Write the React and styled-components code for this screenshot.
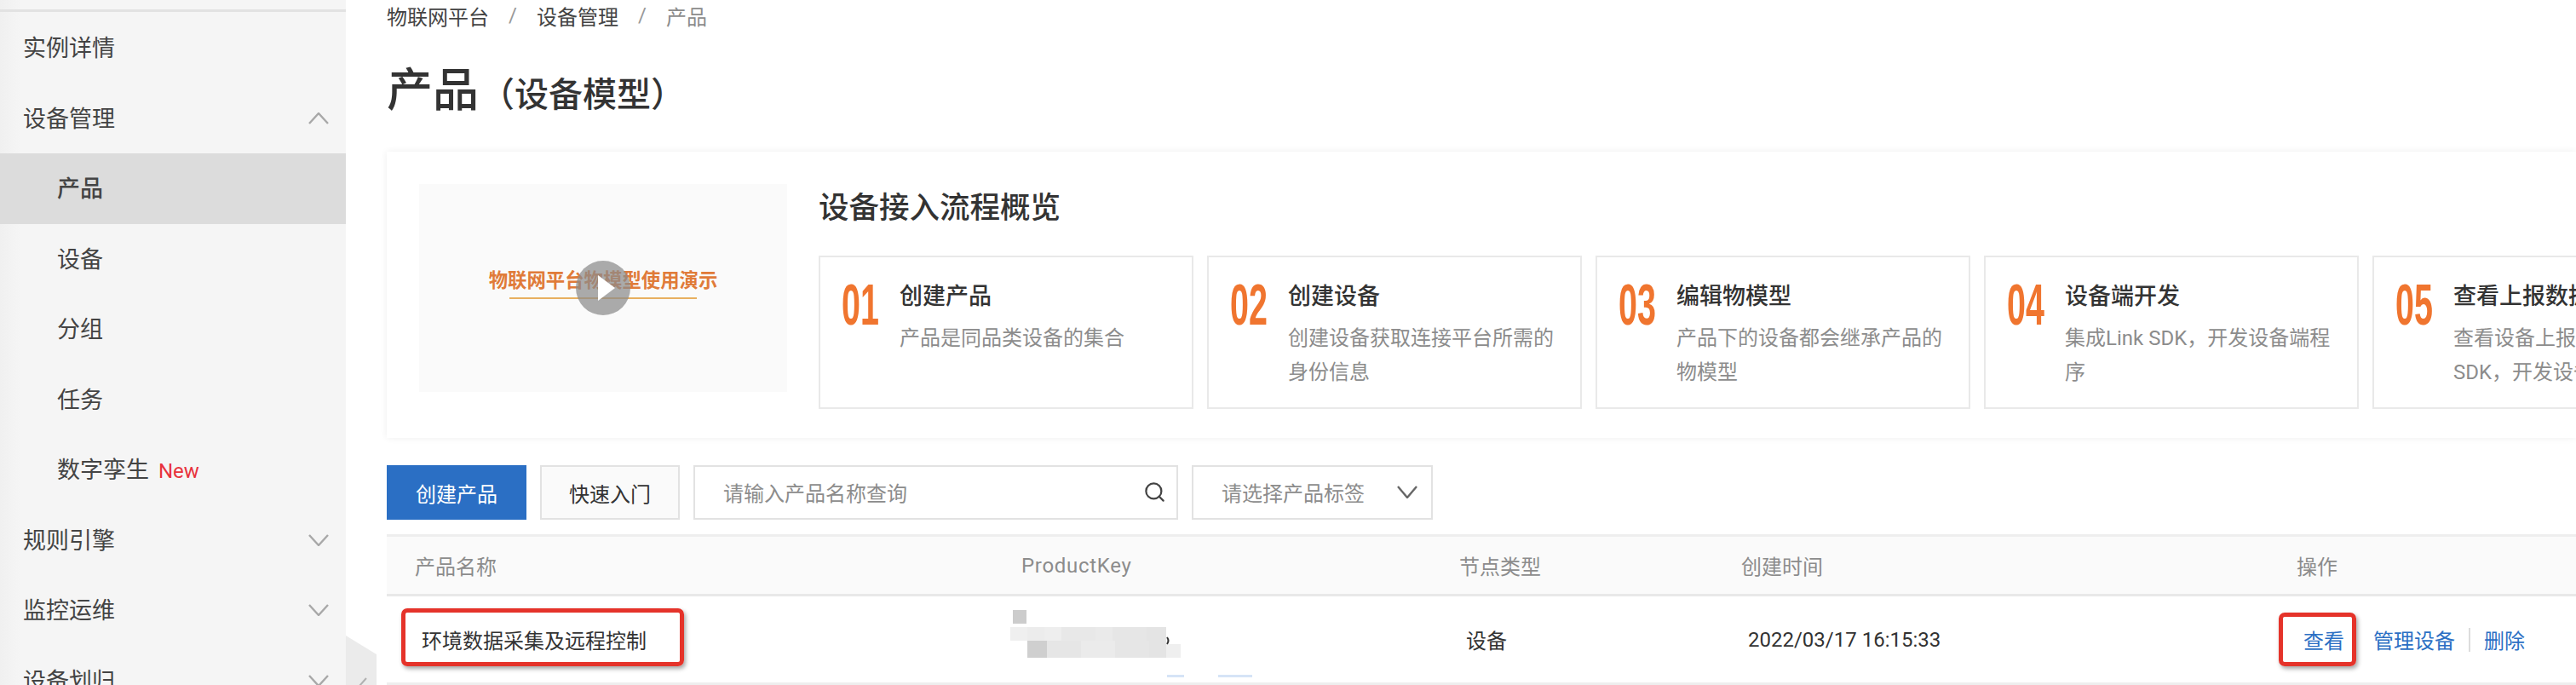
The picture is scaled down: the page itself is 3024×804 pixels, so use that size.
import React from "react";
import styled, { createGlobalStyle } from "styled-components";
import { Search } from "lucide-react";

const GlobalStyle = createGlobalStyle`
  html, body {
    margin: 0;
    padding: 0;
    background: #fff;
    overflow: hidden;
  }
  * {
    box-sizing: border-box;
  }
`;

const Page = styled.div`
  position: relative;
  display: flex;
  width: 3024px;
  height: 804px;
  overflow: hidden;
  font-family: Roboto, "Noto Sans CJK SC", sans-serif;
  font-size: 24px;
  color: #333;
`;

const Sidebar = styled.aside`
  flex: 0 0 406px;
  padding-top: 15px;
  background: linear-gradient(90deg, #f0f0f0 0, #f5f5f5 24px);
  position: relative;

  &::before {
    content: "";
    position: absolute;
    top: 11px;
    left: 0;
    right: 0;
    height: 3px;
    background: #e2e2e2;
  }
`;

const NavRow = styled.div`
  display: flex;
  align-items: center;
  justify-content: space-between;
  height: 82.5px;
  padding-left: ${(p) => (p.$sub ? "67px" : "27px")};
  padding-right: 20px;
  font-size: 27px;
  line-height: 1;
  color: #444;
  background: ${(p) => (p.$active ? "#dcdcdc" : "transparent")};
  font-weight: ${(p) => (p.$active ? 500 : 400)};
  white-space: nowrap;
`;

const NavLabel = styled.span`
  margin-top: 3px;
`;

const NewTag = styled.span`
  margin-left: 11px;
  font-size: 24px;
  color: #e8323c;
`;

const Handle = styled.div`
  position: absolute;
  left: 406px;
  top: 746px;
  width: 36px;
  height: 58px;
  background: #ebebeb;
  clip-path: polygon(0 0, 100% 38%, 100% 100%, 0 100%);
`;

const HandleArrow = styled.svg`
  position: absolute;
  left: 418px;
  top: 794px;
`;

const Main = styled.main`
  flex: 1;
  min-width: 0;
  padding-left: 48px;
  overflow: hidden;
`;

const Breadcrumb = styled.nav`
  display: flex;
  align-items: center;
  height: 36px;
  font-size: 24px;
  color: #444;
`;

const Crumb = styled.span`
  color: ${(p) => (p.$current ? "#8c8c8c" : "#444")};
`;

const CrumbSep = styled.span`
  width: 56px;
  text-align: center;
  color: #999;
`;

const TitleBlock = styled.div`
  display: flex;
  align-items: center;
  height: 142px;
  font-weight: 500;
  color: #333;
`;

const TitleMain = styled.h1`
  margin: 0;
  font-size: 54px;
  font-weight: 500;
  line-height: 1;
`;

const TitleSub = styled.span`
  font-size: 40px;
  line-height: 1;
  margin-top: 9px;
  margin-left: 2px;
`;

const OverviewCard = styled.section`
  display: flex;
  height: 336px;
  padding: 38px 0 0 38px;
  background: #fff;
  box-shadow: 0 0 8px rgba(0, 0, 0, 0.07);
`;

const Thumb = styled.div`
  position: relative;
  flex: 0 0 432px;
  height: 244px;
  background: #fafafa;
  display: flex;
  flex-direction: column;
  align-items: center;
  padding-top: 97px;
`;

const ThumbTitle = styled.div`
  font-size: 22.4px;
  line-height: 32px;
  font-weight: 700;
  color: #e07b39;
  white-space: nowrap;
`;

const ThumbLine = styled.div`
  width: 220px;
  height: 2px;
  margin-top: 4px;
  background: #e8b060;
`;

const Play = styled.svg`
  position: absolute;
  left: 184px;
  top: 90px;
`;

const Intro = styled.div`
  flex: 1;
  min-width: 0;
  margin-left: 37px;
`;

const IntroTitle = styled.h2`
  margin: 0;
  height: 84px;
  padding-top: 3px;
  font-size: 35.5px;
  line-height: 50px;
  font-weight: 500;
  color: #333;
`;

const Steps = styled.div`
  display: flex;
  gap: 16px;
`;

const Step = styled.div`
  display: flex;
  flex: 0 0 440px;
  height: 180px;
  border: 2px solid #e9e9e9;
  background: #fff;
  padding: 0 0 0 25px;
`;

const StepNum = styled.div`
  flex: 0 0 68px;
  min-width: 0;
  margin-top: 19px;
  font-family: "Liberation Sans", sans-serif;
  font-size: 68px;
  line-height: 72px;
  font-weight: 700;
  color: #f0752f;
  white-space: nowrap;
  transform: scaleX(0.58);
  transform-origin: left center;
`;

const StepBody = styled.div`
  flex: 1;
  min-width: 0;
  padding-top: 26px;
`;

const StepTitle = styled.div`
  font-size: 27px;
  line-height: 40px;
  font-weight: 500;
  color: #333;
  white-space: nowrap;
`;

const StepText = styled.div`
  margin-top: 9px;
  width: 324px;
  font-size: 24px;
  line-height: 40px;
  color: #8c8c8c;
`;

const Toolbar = styled.div`
  display: flex;
  gap: 16px;
  height: 64px;
  margin-top: 32px;
`;

const Button = styled.button`
  width: 164px;
  height: 64px;
  padding: 0;
  font: inherit;
  border: ${(p) => (p.$primary ? "0" : "2px solid #e2e2e2")};
  background: ${(p) => (p.$primary ? "#2b6fc4" : "#fafafa")};
  color: ${(p) => (p.$primary ? "#fff" : "#333")};
`;

const Field = styled.div`
  display: flex;
  align-items: center;
  justify-content: space-between;
  width: ${(p) => p.$w}px;
  height: 64px;
  padding: 0 ${(p) => p.$pr}px 2px 33px;
  border: 2px solid #e2e2e2;
  color: #8c8c8c;
  white-space: nowrap;
`;

const Table = styled.div`
  margin-top: 17px;
`;

const Row = styled.div`
  display: grid;
  grid-template-columns: 737px 514px 331px 652px 1fr;
  align-items: center;
  height: ${(p) => (p.$head ? "73px" : "104px")};
  border-top: ${(p) => (p.$head ? "3px solid #eee" : "0")};
  border-bottom: ${(p) => (p.$head ? "3px solid #e8e8e8" : "3px solid #eee")};
  background: ${(p) => (p.$head ? "#fafafa" : "#fff")};
  color: ${(p) => (p.$head ? "#8c8c8c" : "#333")};
`;

const Cell = styled.div`
  position: relative;
  padding-left: ${(p) => (p.$first ? (p.$head ? "33px" : "41px") : p.$head ? "8px" : "16px")};
  white-space: nowrap;
`;

const LatinLabel = styled.span`
  letter-spacing: 0.7px;
`;

const Mosaic = styled.svg`
  display: block;
  margin: -3px 0 0 -21px;
`;

const Actions = styled.div`
  display: flex;
  align-items: center;
  color: #2b6fc4;
`;

const ActionLink = styled.span`
  margin-left: ${(p) => p.$gap}px;
`;

const ActionDivider = styled.span`
  width: 2px;
  height: 28px;
  margin-left: 16px;
  background: #dcdcdc;
`;

const Callout = styled.div`
  position: absolute;
  left: ${(p) => p.$left}px;
  top: ${(p) => p.$top}px;
  width: ${(p) => p.$w}px;
  height: ${(p) => p.$h}px;
  border: 5px solid #e5332a;
  border-radius: 7px;
  box-shadow: 2px 3px 5px rgba(0, 0, 0, 0.35);
  pointer-events: none;
`;

function Chevron({ up, color = "#a8a8a8", width = 24, height = 14, stroke = 2.4 }) {
  const pts = up
    ? `1,${height - 1} ${width / 2},1 ${width - 1},${height - 1}`
    : `1,1 ${width / 2},${height - 1} ${width - 1},1`;
  return (
    <svg width={width} height={height} viewBox={`0 0 ${width} ${height}`}>
      <polyline points={pts} fill="none" stroke={color} strokeWidth={stroke} />
    </svg>
  );
}

const NAV = [
  { label: "实例详情" },
  { label: "设备管理", arrow: "up" },
  { label: "产品", sub: true, active: true },
  { label: "设备", sub: true },
  { label: "分组", sub: true },
  { label: "任务", sub: true },
  { label: "数字孪生", sub: true, tag: "New" },
  { label: "规则引擎", arrow: "down" },
  { label: "监控运维", arrow: "down" },
  { label: "设备划归", arrow: "down" },
];

const STEPS = [
  { num: "01", title: "创建产品", text: "产品是同品类设备的集合" },
  { num: "02", title: "创建设备", text: "创建设备获取连接平台所需的身份信息" },
  { num: "03", title: "编辑物模型", text: "产品下的设备都会继承产品的物模型" },
  { num: "04", title: "设备端开发", text: "集成Link SDK，开发设备端程序" },
  { num: "05", title: "查看上报数据", text: "查看设备上报数据，集成Link SDK，开发设备端" },
];

const TILES = [
  [3, 17, 16, 16, "#cccccc"],
  [0, 37, 20, 16, "#efefef"],
  [20, 37, 20, 16, "#ececec"],
  [40, 37, 20, 16, "#eeeeee"],
  [60, 37, 40, 16, "#e8e8e8"],
  [100, 37, 20, 16, "#eaeaea"],
  [120, 37, 40, 16, "#e6e6e6"],
  [160, 37, 23, 16, "#e4e4e4"],
  [20, 53, 23, 20, "#cfcfcf"],
  [43, 53, 40, 20, "#e6e6e6"],
  [83, 53, 40, 20, "#ebebeb"],
  [123, 53, 40, 20, "#e6e6e6"],
  [163, 53, 20, 20, "#e4e4e4"],
  [183, 57, 17, 16, "#efefef"],
];

export default function App() {
  return (
    <Page>
      <GlobalStyle />
      <Sidebar>
        {NAV.map((item) => (
          <NavRow key={item.label} $sub={item.sub} $active={item.active}>
            <NavLabel>
              {item.label}
              {item.tag && <NewTag>{item.tag}</NewTag>}
            </NavLabel>
            {item.arrow && <Chevron up={item.arrow === "up"} />}
          </NavRow>
        ))}
      </Sidebar>
      <Handle />
      <HandleArrow width="14" height="12" viewBox="0 0 14 12">
        <polyline points="12,2 4,11" fill="none" stroke="#b0b0b0" strokeWidth="2" />
      </HandleArrow>
      <Main>
        <Breadcrumb>
          <Crumb>物联网平台</Crumb>
          <CrumbSep>/</CrumbSep>
          <Crumb>设备管理</Crumb>
          <CrumbSep>/</CrumbSep>
          <Crumb $current>产品</Crumb>
        </Breadcrumb>
        <TitleBlock>
          <TitleMain>产品</TitleMain>
          <TitleSub>（设备模型）</TitleSub>
        </TitleBlock>
        <OverviewCard>
          <Thumb>
            <ThumbTitle>物联网平台物模型使用演示</ThumbTitle>
            <ThumbLine />
            <Play width="64" height="64" viewBox="0 0 64 64">
              <circle cx="32" cy="32" r="32" fill="#8a8a8a" fillOpacity="0.72" />
              <polygon points="26,17 46,32 26,47" fill="#fff" />
            </Play>
          </Thumb>
          <Intro>
            <IntroTitle>设备接入流程概览</IntroTitle>
            <Steps>
              {STEPS.map((step) => (
                <Step key={step.num}>
                  <StepNum>{step.num}</StepNum>
                  <StepBody>
                    <StepTitle>{step.title}</StepTitle>
                    <StepText>{step.text}</StepText>
                  </StepBody>
                </Step>
              ))}
            </Steps>
          </Intro>
        </OverviewCard>
        <Toolbar>
          <Button $primary>创建产品</Button>
          <Button>快速入门</Button>
          <Field $w={569} $pr={12}>
            请输入产品名称查询
            <Search size={27} color="#444" strokeWidth={2} />
          </Field>
          <Field $w={283} $pr={16}>
            请选择产品标签
            <Chevron color="#666" width={24} height={15} stroke={2.4} />
          </Field>
        </Toolbar>
        <Table>
          <Row $head>
            <Cell $head $first>产品名称</Cell>
            <Cell $head><LatinLabel>ProductKey</LatinLabel></Cell>
            <Cell $head>节点类型</Cell>
            <Cell $head>创建时间</Cell>
            <Cell $head>操作</Cell>
          </Row>
          <Row>
            <Cell $first>环境数据采集及远程控制</Cell>
            <Cell>
              <Mosaic width="290" height="101" viewBox="0 0 290 101">
                {TILES.map(([x, y, w, h, fill]) => (
                  <rect key={`${x}-${y}`} x={x} y={y} width={w} height={h} fill={fill} />
                ))}
                <path d="M184 49q3 4 0 8" fill="none" stroke="#333" strokeWidth="2" />
                <rect x="184" y="93" width="20" height="3" fill="#d6e4f7" />
                <rect x="244" y="93" width="40" height="3" fill="#d6e4f7" />
              </Mosaic>
            </Cell>
            <Cell>设备</Cell>
            <Cell>2022/03/17 16:15:33</Cell>
            <Cell>
              <Actions>
                <span>查看</span>
                <ActionLink $gap={34}>管理设备</ActionLink>
                <ActionDivider />
                <ActionLink $gap={16}>删除</ActionLink>
              </Actions>
            </Cell>
          </Row>
        </Table>
      </Main>
      <Callout $left={471} $top={714} $w={332} $h={68} />
      <Callout $left={2675} $top={719} $w={91} $h={63} />
    </Page>
  );
}
